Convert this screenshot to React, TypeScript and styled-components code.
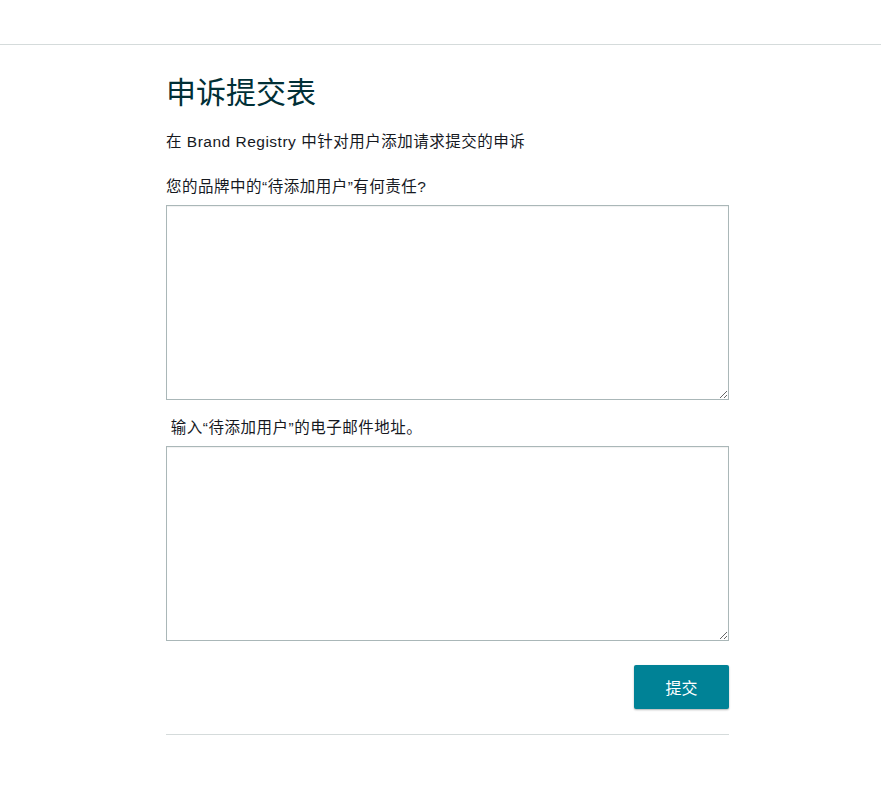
import React from "react";
import styled, { createGlobalStyle } from "styled-components";

const GlobalStyle = createGlobalStyle`
  html, body {
    margin: 0;
    padding: 0;
    background: #ffffff;
    font-family: "Liberation Sans", "Noto Sans CJK SC", Arial, sans-serif;
    color: #16191f;
  }
`;

const TopBar = styled.div`
  height: 44px;
  border-bottom: 1px solid #d5dbdb;
`;

const Page = styled.div`
  width: 563px;
  margin: 0 auto;
  padding-top: 30px;
  transform: translateX(7px);
`;

const Title = styled.h1`
  margin: 0;
  font-size: 30px;
  font-weight: 400;
  line-height: 36px;
  color: #002f36;
`;

const Subtitle = styled.p`
  margin: 21px 0 0;
  font-size: 15.5px;
  letter-spacing: 0.5px;
  line-height: 20px;
`;

const Field = styled.div<{ $top: number }>`
  display: flex;
  flex-direction: column;
  margin-top: ${(p) => p.$top}px;
`;

const Label = styled.label`
  font-size: 15.5px;
  letter-spacing: 0.5px;
  line-height: 20px;
  margin-bottom: 8px;
  white-space: pre;
`;

const TextArea = styled.textarea`
  box-sizing: border-box;
  width: 563px;
  height: 195px;
  border: 1px solid #aab7b8;
  border-radius: 0;
  box-shadow: inset 0 1px 1px rgba(0, 0, 0, 0.06);
  resize: vertical;
  margin: 0;
  padding: 6px 8px;
  font-family: inherit;
  font-size: 14px;
  outline: none;
`;

const Actions = styled.div`
  display: flex;
  justify-content: flex-end;
  margin-top: 24px;
`;

const SubmitButton = styled.button`
  width: 95px;
  height: 44px;
  border: none;
  border-radius: 2px;
  background: #008296;
  color: #ffffff;
  font-family: inherit;
  font-size: 16px;
  box-shadow: 0 1px 2px rgba(0, 0, 0, 0.3);
  cursor: pointer;
`;

const Divider = styled.hr`
  margin: 25px 0 0;
  border: none;
  border-top: 1px solid #d5dbdb;
`;

export default function App() {
  return (
    <>
      <GlobalStyle />
      <TopBar />
      <Page>
        <Title>申诉提交表</Title>
        <Subtitle>在 Brand Registry 中针对用户添加请求提交的申诉</Subtitle>
        <Field $top={25}>
          <Label>您的品牌中的“待添加用户”有何责任?</Label>
          <TextArea />
        </Field>
        <Field $top={18}>
          <Label> 输入“待添加用户”的电子邮件地址。</Label>
          <TextArea />
        </Field>
        <Actions>
          <SubmitButton>提交</SubmitButton>
        </Actions>
        <Divider />
      </Page>
    </>
  );
}
